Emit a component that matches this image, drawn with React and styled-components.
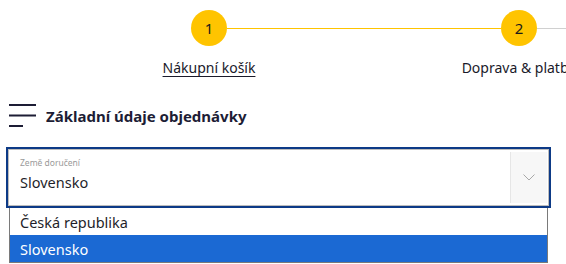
import React from 'react';
import styled, { createGlobalStyle } from 'styled-components';

const Global = createGlobalStyle`
  html, body {
    margin: 0;
    padding: 0;
    overflow: hidden;
    background: #fff;
    font-family: "Noto Sans", "Open Sans", sans-serif;
    color: #1d1d35;
  }
`;

const steps = [
  { n: 1, label: 'Nákupní košík', link: true },
  { n: 2, label: 'Doprava & platba' },
  { n: 3, label: 'Dodací údaje' },
];

const Page = styled.div`
  width: 566px;
  height: 264px;
  overflow: hidden;
`;

const Stepper = styled.div`
  display: flex;
  margin-left: 54px;
  padding-top: 10px;
  width: max-content;
`;

const Step = styled.div`
  position: relative;
  width: 310px;
  display: flex;
  flex-direction: column;
  align-items: center;

  &::before, &::after {
    content: "";
    position: absolute;
    top: 18px;
    height: 1px;
    width: calc(50% - 18px);
  }
  &::before {
    left: 0;
    background: ${p => p.$first ? 'transparent' : p.$done ? '#ffc400' : '#d0d0d0'};
  }
  &::after {
    right: 0;
    background: ${p => p.$nextDone ? '#ffc400' : '#d0d0d0'};
  }
`;

const Circle = styled.div`
  width: 36px;
  height: 36px;
  border-radius: 50%;
  background: ${p => p.$done ? '#ffc400' : '#e6e6e6'};
  display: flex;
  align-items: center;
  justify-content: center;
  font-size: 15px;
  color: #1a1a1a;
`;

const StepLabel = styled.div`
  margin-top: 12px;
  font-size: 14px;
  white-space: nowrap;
  color: #1a1a2a;
  text-decoration: ${p => p.$link ? 'underline' : 'none'};
  text-underline-offset: 3px;
`;

const Heading = styled.div`
  display: flex;
  align-items: center;
  gap: 9px;
  margin: 27px 0 0 9px;
`;

const HeadingText = styled.h2`
  margin: 0;
  font-size: 15px;
  font-weight: 700;
  color: #1d1d35;
`;

const SelectWrap = styled.div`
  margin: 20px 0 0 6px;
  width: 545px;
  position: relative;
`;

const SelectBox = styled.div`
  border: 2px solid #0d3a86;
  height: 57px;
`;

const SelectInner = styled.div`
  border: 1px solid #bdbdbd;
  height: 55px;
  display: flex;
  align-items: stretch;
  background: #fff;
`;

const ValueArea = styled.div`
  flex: 1;
  display: flex;
  flex-direction: column;
  padding: 7px 0 0 11px;
`;

const FloatLabel = styled.span`
  font-size: 8.5px;
  color: #9a9a9a;
  line-height: 12px;
`;

const Value = styled.span`
  font-size: 14.5px;
  color: #1f1f2a;
  line-height: 20px;
  margin-top: 3px;
`;

const Arrow = styled.div`
  width: 36px;
  margin: 2px 1px 2px 0;
  background: #f7f7f7;
  border-left: 1px solid #e6e6e6;
  display: flex;
  align-items: center;
  justify-content: center;
`;

const List = styled.ul`
  list-style: none;
  margin: 0 0 0 3px;
  padding: 0;
  width: 537px;
  border: 1px solid #7a7a7a;
  border-top: none;
  background: #fff;
`;

const Option = styled.li`
  height: 27px;
  display: flex;
  align-items: center;
  padding-left: 10px;
  font-size: 14.5px;
  color: ${p => p.$selected ? '#fff' : '#1f1f2a'};
  background: ${p => p.$selected ? '#1b69d3' : '#fff'};
`;

const Burger = () => (
  <svg width="28" height="23" viewBox="0 0 28 23">
    <path d="M0 1h27M0 11.5h27M0 22h14" stroke="#1d1d35" strokeWidth="2" fill="none" />
  </svg>
);

const Chevron = () => (
  <svg width="12" height="7" viewBox="0 0 12 7">
    <path d="M0.5 0.5L6 6L11.5 0.5" stroke="#a8a8a8" strokeWidth="1" fill="none" />
  </svg>
);

export default function App() {
  return (
    <Page>
      <Global />
      <Stepper>
        {steps.map((s, i) => (
          <Step key={s.n} $first={i === 0} $done={s.n <= 2} $nextDone={s.n < 2}>
            <Circle $done={s.n <= 2}>{s.n}</Circle>
            <StepLabel $link={s.link}>{s.label}</StepLabel>
          </Step>
        ))}
      </Stepper>
      <Heading>
        <Burger />
        <HeadingText>Základní údaje objednávky</HeadingText>
      </Heading>
      <SelectWrap>
        <SelectBox>
          <SelectInner>
            <ValueArea>
              <FloatLabel>Země doručení</FloatLabel>
              <Value>Slovensko</Value>
            </ValueArea>
            <Arrow><Chevron /></Arrow>
          </SelectInner>
        </SelectBox>
        <List>
          <Option>Česká republika</Option>
          <Option $selected>Slovensko</Option>
        </List>
      </SelectWrap>
    </Page>
  );
}
